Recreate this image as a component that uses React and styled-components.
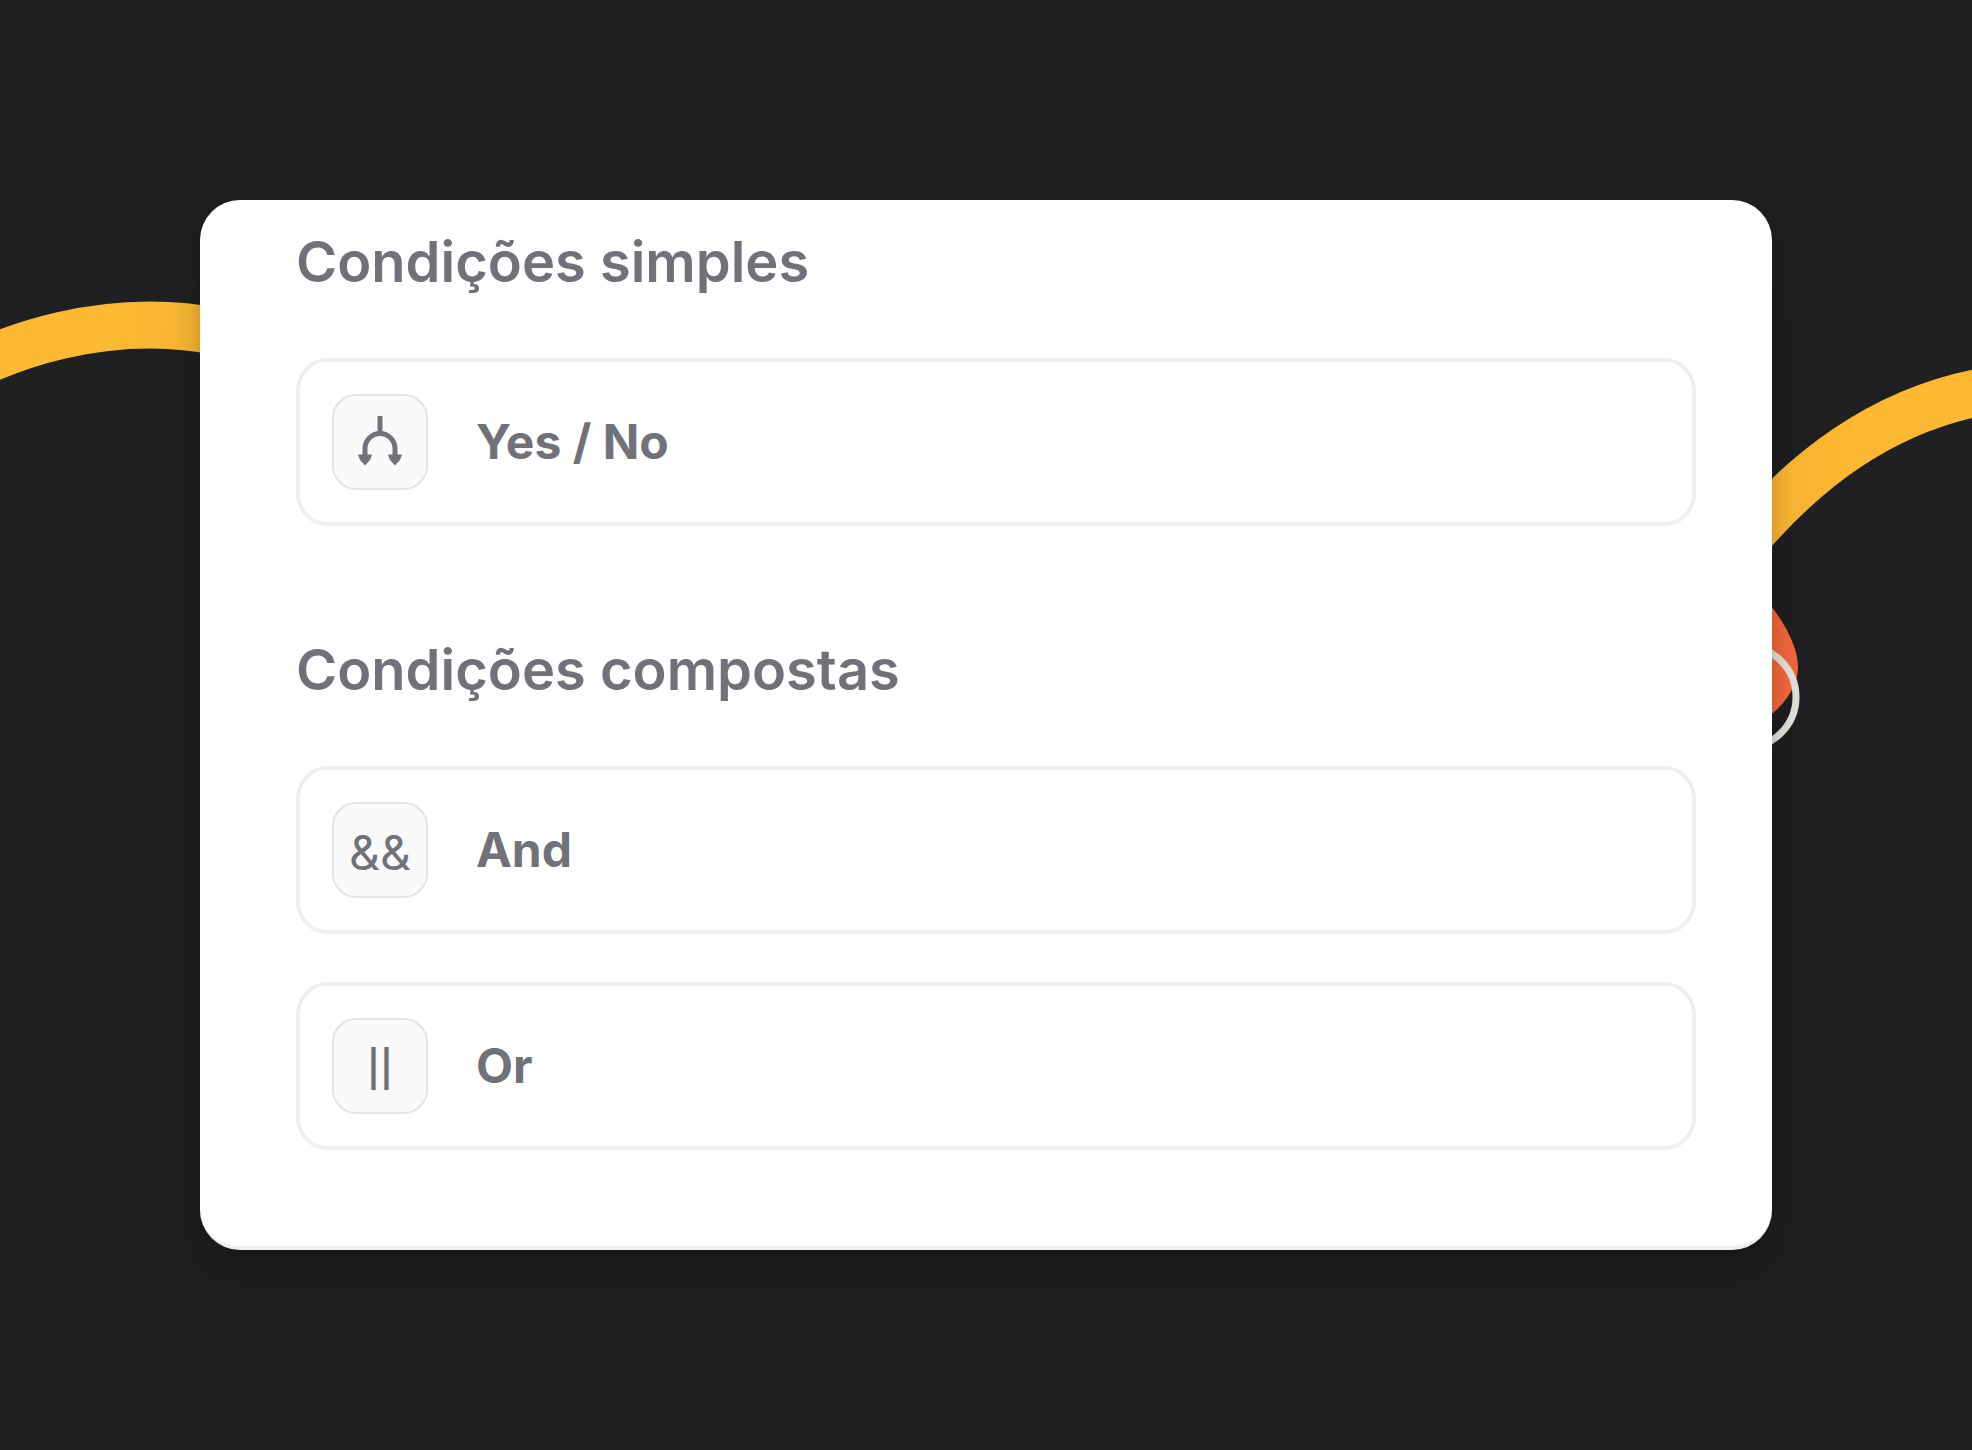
import React from "react";
import styled, { createGlobalStyle } from "styled-components";

const GlobalStyle = createGlobalStyle`
  *, *::before, *::after { box-sizing: border-box; }
  body { margin: 0; background: #202022; }
`;

const Page = styled.main`
  position: relative;
  display: flex;
  align-items: center;
  justify-content: center;
  min-height: 100vh;
  padding: 200px;
  overflow: hidden;
  background: #202022;
  font-family: Inter, "Liberation Sans", sans-serif;
`;

const Backdrop = styled.svg`
  position: absolute;
  inset: 0;
  width: 100%;
  height: 100%;
`;

const Card = styled.section`
  position: relative;
  flex: 1;
  display: flex;
  flex-direction: column;
  gap: 112px;
  padding: 30px 76px 96px 96px;
  background: #fff;
  border-bottom: 4px solid #efefef;
  border-radius: 40px;
  box-shadow: 0 12px 24px -4px rgba(0, 0, 0, 0.28), 0 48px 96px rgba(0, 0, 0, 0.1);
`;

const Group = styled.section`
  display: flex;
  flex-direction: column;
  gap: 64px;
`;

const GroupTitle = styled.h2`
  margin: 0;
  color: #71717a;
  font-size: 56px;
  font-weight: 600;
  line-height: 64px;
`;

const Options = styled.div`
  display: flex;
  flex-direction: column;
  gap: 48px;
`;

const Option = styled.button`
  display: flex;
  align-items: center;
  gap: 48px;
  width: 100%;
  padding: 32px;
  border: 4px solid #efefef;
  border-radius: 32px;
  background: #fff;
  color: #71717a;
  font-family: inherit;
  font-size: 48px;
  font-weight: 700;
  line-height: 64px;
  text-align: left;
  cursor: pointer;
`;

const Tile = styled.span`
  display: flex;
  align-items: center;
  justify-content: center;
  width: 96px;
  height: 96px;
  border: 2px solid #e5e5e5;
  border-radius: 24px;
  background: #fafafa;
`;

const Operator = styled.span`
  padding-top: 5px;
  font-size: ${({ $small }) => ($small ? "36px" : "48px")};
  font-weight: ${({ $small }) => ($small ? 600 : 400)};
`;

function BranchIcon() {
  return (
    <svg width="48" height="52" viewBox="0 0 48 52" fill="none" aria-hidden="true">
      <path d="M24 0V17M9 42V32.5a15 15 0 0 1 30 0V42" stroke="currentColor" strokeWidth="5" />
      <path
        d="M2 38.5H16L14 44L9 49.5L4 44ZM32 38.5H46L44 44L39 49.5L34 44Z"
        fill="currentColor"
      />
    </svg>
  );
}

const groups = [
  { title: "Condições simples", options: [{ label: "Yes / No", icon: <BranchIcon /> }] },
  {
    title: "Condições compostas",
    options: [
      { label: "And", icon: <Operator>&&</Operator> },
      { label: "Or", icon: <Operator $small>||</Operator> },
    ],
  },
];

export default function App() {
  return (
    <Page>
      <GlobalStyle />
      <Backdrop viewBox="0 0 1972 1450" preserveAspectRatio="none" aria-hidden="true">
        <g fill="none" stroke="#fdb933" strokeWidth="47">
          <path d="M-20 363C30 340 90 325 150 325C175 325 195 327 220 332" />
          <path d="M1740 547C1800 475 1880 408 1992 390" />
        </g>
        <path d="M1740 572C1775 605 1798 640 1798 668C1797 690 1782 712 1740 736Z" fill="#f6693c" />
        <circle cx="1745" cy="697" r="51" fill="none" stroke="#e8e4df" strokeWidth="7" />
      </Backdrop>
      <Card>
        {groups.map(({ title, options }) => (
          <Group key={title}>
            <GroupTitle>{title}</GroupTitle>
            <Options>
              {options.map(({ label, icon }) => (
                <Option key={label} type="button">
                  <Tile aria-hidden="true">{icon}</Tile>
                  {label}
                </Option>
              ))}
            </Options>
          </Group>
        ))}
      </Card>
    </Page>
  );
}
